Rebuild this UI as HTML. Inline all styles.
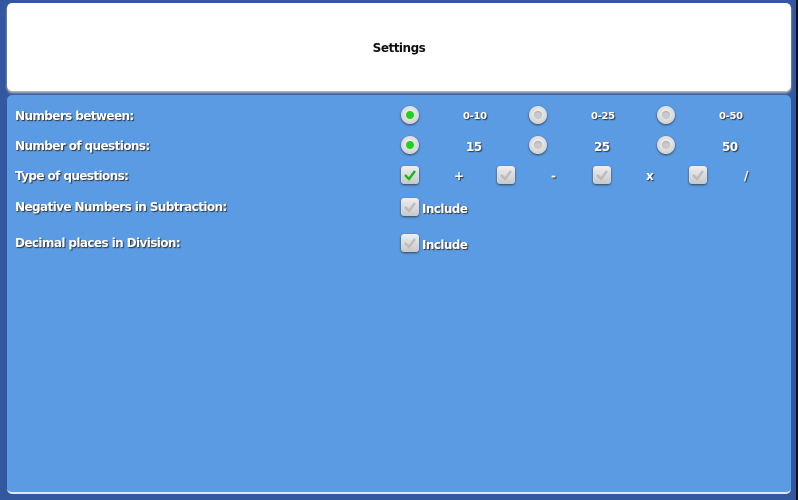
<!DOCTYPE html>
<html><head><style>
body{margin:0;width:798px;height:500px;background:#34589f;position:relative;overflow:hidden;font-family:"DejaVu Sans","Liberation Sans",sans-serif;font-weight:bold}
.hdr{position:absolute;left:7px;top:3px;width:784px;height:88px;background:#fff;border-radius:5px;box-shadow:0 2px 2px #bbb}
.hdr span{position:absolute;left:0;right:0;top:38px;text-align:center;font-size:12px;color:#111;letter-spacing:-0.5px}
.pnl{position:absolute;left:7px;top:95px;width:784px;height:397px;background:#5b9be3;border-radius:5px;border-bottom:2px solid #dfe8f5}
.t{position:absolute;color:#fff;font-size:12px;text-shadow:1px 1px 1px #333;white-space:nowrap;letter-spacing:-0.6px}
.s{font-size:10px;letter-spacing:-0.3px}
.r{position:absolute;width:18px;height:18px;border-radius:50%;background:radial-gradient(circle at 50% 40%,#f2f2f2,#c8c8c8);box-shadow:0 1px 2px #345}
.r.on::after{content:"";position:absolute;left:5px;top:5px;width:8px;height:8px;border-radius:50%;background:#1ed21e}
.r:not(.on)::after{content:"";position:absolute;left:5px;top:5px;width:8px;height:8px;border-radius:50%;background:#c9c9c9;box-shadow:inset 0 1px 1px #aaa}
.c{position:absolute;width:18px;height:18px;border-radius:3px;background:linear-gradient(#eee,#c8c8c8);box-shadow:0 1px 2px #345}
.c svg{position:absolute;left:2px;top:2px}
.rb{position:absolute;right:0;top:0;width:2px;height:500px;background:#111}
</style></head><body>
<div class="hdr"><span>Settings</span></div>
<div class="pnl"></div>
<div class="rb"></div>
<div class="t" style="left:15px;top:109px">Numbers between:</div>
<div class="t" style="left:15px;top:139px">Number of questions:</div>
<div class="t" style="left:15px;top:169px">Type of questions:</div>
<div class="t" style="left:15px;top:200px">Negative Numbers in Subtraction:</div>
<div class="t" style="left:15px;top:236px">Decimal places in Division:</div>

<div class="r on" style="left:401px;top:106px"></div>
<div class="r" style="left:529px;top:106px"></div>
<div class="r" style="left:657px;top:106px"></div>
<div class="t s" style="left:463px;top:111px">0-10</div>
<div class="t s" style="left:591px;top:111px">0-25</div>
<div class="t s" style="left:719px;top:111px">0-50</div>

<div class="r on" style="left:401px;top:136px"></div>
<div class="r" style="left:529px;top:136px"></div>
<div class="r" style="left:657px;top:136px"></div>
<div class="t" style="left:466px;top:140px">15</div>
<div class="t" style="left:594px;top:140px">25</div>
<div class="t" style="left:722px;top:140px">50</div>

<div class="c" style="left:401px;top:166px"><svg width="14" height="14"><path d="M2 7 L6 11 L12 3" stroke="#1fb51f" stroke-width="2.5" fill="none"/></svg></div>
<div class="c" style="left:497px;top:166px"><svg width="14" height="14"><path d="M2 7 L6 11 L12 3" stroke="#bcbcbc" stroke-width="2.5" fill="none"/></svg></div>
<div class="c" style="left:593px;top:166px"><svg width="14" height="14"><path d="M2 7 L6 11 L12 3" stroke="#bcbcbc" stroke-width="2.5" fill="none"/></svg></div>
<div class="c" style="left:689px;top:166px"><svg width="14" height="14"><path d="M2 7 L6 11 L12 3" stroke="#bcbcbc" stroke-width="2.5" fill="none"/></svg></div>
<div class="t" style="left:454px;top:169px">+</div>
<div class="t" style="left:551px;top:169px">-</div>
<div class="t" style="left:646px;top:169px">x</div>
<div class="t" style="left:744px;top:169px">/</div>

<div class="c" style="left:401px;top:198px"><svg width="14" height="14"><path d="M2 7 L6 11 L12 3" stroke="#bcbcbc" stroke-width="2.5" fill="none"/></svg></div>
<div class="t" style="left:422px;top:202px">Include</div>
<div class="c" style="left:401px;top:234px"><svg width="14" height="14"><path d="M2 7 L6 11 L12 3" stroke="#bcbcbc" stroke-width="2.5" fill="none"/></svg></div>
<div class="t" style="left:422px;top:238px">Include</div>
</body></html>
